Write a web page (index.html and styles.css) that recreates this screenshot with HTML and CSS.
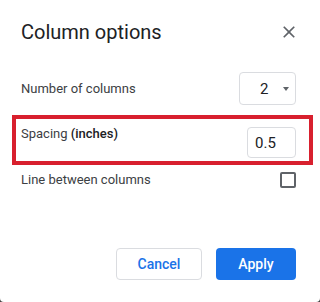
FILE: index.html
```html
<!DOCTYPE html>
<html lang="en">
  <head>
    <meta charset="UTF-8" />
    <meta name="viewport" content="width=device-width, initial-scale=1.0" />
    <title>Column options</title>
    <link rel="stylesheet" href="styles.css">
  </head>

  <body>
    <div class="dialog">
      <div class="dialog-header">
        <h2>Column options</h2>
        <button class="close-btn" type="button" aria-label="Close">
          <svg viewBox="0 0 24 24" width="20" height="20">
            <path d="M19 6.41L17.59 5 12 10.59 6.41 5 5 6.41 10.59 12 5 17.59 6.41 19 12 13.41 17.59 19 19 17.59 13.41 12z" fill="#5f6368" />
          </svg>
        </button>
      </div>

      <div class="option-row columns-row">
        <label>Number of columns</label>
        <div class="select-box">
          <span class="select-value">2</span>
          <span class="select-arrow"></span>
        </div>
      </div>

      <div class="option-row spacing-row">
        <label for="spacing">Spacing <b>(inches)</b></label>
        <input id="spacing" class="spacing-input" type="text" value="0.5" />
      </div>

      <div class="option-row line-row">
        <label for="line-between">Line between columns</label>
        <span class="checkbox" id="line-between"></span>
      </div>

      <div class="dialog-footer">
        <button class="btn btn-cancel" type="button">Cancel</button>
        <button class="btn btn-apply" type="button">Apply</button>
      </div>
    </div>
  </body>
</html>
```

FILE: styles.css
```css
html {
  background-color: #444;
}

body {
  margin: 0;
  padding: 0;
  font-family: Roboto, "Liberation Sans", Arial, sans-serif;
  color: #3c4043;
}

.dialog {
  box-sizing: border-box;
  display: flex;
  flex-direction: column;
  width: 320px;
  height: 302px;
  padding: 18px 24px 22px 21px;
  background-color: #fff;
  border-radius: 0 0 4px 4px;
}

.dialog-header {
  display: flex;
  justify-content: space-between;
  align-items: center;
  height: 28px;
}

.dialog-header h2 {
  margin: 0;
  font-size: 20px;
  font-weight: 400;
  line-height: 28px;
  color: #202124;
}

.close-btn {
  display: flex;
  margin-right: -3px;
  padding: 0;
  border: none;
  background: none;
  cursor: pointer;
}

.option-row {
  display: flex;
  justify-content: space-between;
  font-size: 13px;
  line-height: 20px;
}

.columns-row {
  align-items: center;
  margin-top: 26px;
}

.select-box {
  box-sizing: border-box;
  display: flex;
  align-items: center;
  width: 57px;
  height: 33px;
  padding-left: 20px;
  border: 1px solid #dadce0;
  border-radius: 4px;
  font-size: 15px;
  color: #202124;
}

.select-arrow {
  margin-left: 15px;
  border-left: 3.5px solid transparent;
  border-right: 3.5px solid transparent;
  border-top: 4px solid #5f6368;
}

.spacing-row {
  align-items: flex-start;
  margin: 10px -17px 0 -9px;
  padding: 8px 13px 3px 5px;
  border: 4px solid #d8202e;
}

.spacing-row label {
  margin-top: -3px;
}

.spacing-row b {
  font-weight: 500;
  color: #202124;
}

.spacing-input {
  box-sizing: border-box;
  width: 49px;
  height: 31px;
  padding: 0 0 0 7px;
  border: 1px solid #dadce0;
  border-radius: 4px;
  font-family: inherit;
  font-size: 15px;
  color: #202124;
  outline: none;
}

.line-row {
  align-items: center;
  margin-top: 5px;
}

.checkbox {
  box-sizing: border-box;
  width: 16px;
  height: 16px;
  border: 2px solid #5f6368;
  border-radius: 2px;
}

.dialog-footer {
  display: flex;
  justify-content: flex-end;
  gap: 14px;
  margin-top: auto;
}

.btn {
  box-sizing: border-box;
  height: 32px;
  border-radius: 4px;
  font-family: inherit;
  font-size: 14px;
  font-weight: 500;
  cursor: pointer;
}

.btn-cancel {
  width: 86px;
  background-color: #fff;
  border: 1px solid #dadce0;
  color: #1a73e8;
}

.btn-apply {
  width: 80px;
  background-color: #1a73e8;
  border: none;
  color: #fff;
}
```
